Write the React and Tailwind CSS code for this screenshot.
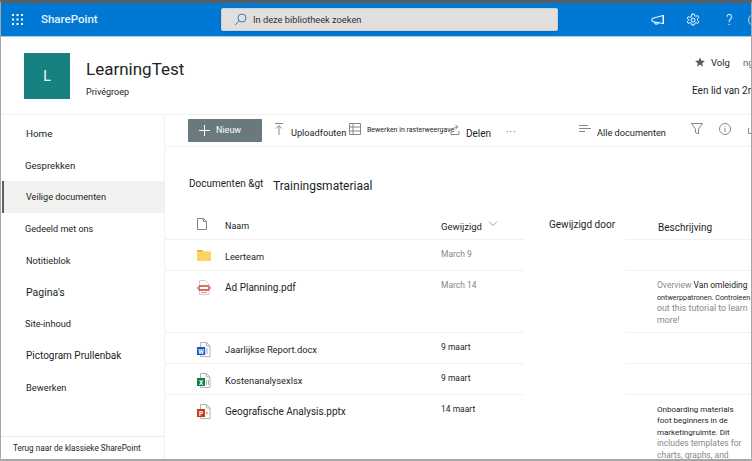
const font = { fontFamily: 'Roboto, "Open Sans", sans-serif' }

const navItems = [
  { label: 'Home', cls: 'text-[9.8px] pl-[25px]' },
  { label: 'Gesprekken', cls: 'text-[9.6px] pl-[24px]' },
  { label: 'Veilige documenten', cls: 'text-[9.1px] bg-[#f3f2f1] border-l-2 border-[#605e5c] ml-px pl-[22px]' },
  { label: 'Gedeeld met ons', cls: 'text-[9.1px] pl-[24px]' },
  { label: 'Notitieblok', cls: 'text-[9.2px] pl-[25px]' },
  { label: "Pagina's", cls: 'text-[10.5px] pl-[25px]' },
  { label: 'Site-inhoud', cls: 'text-[9.2px] pl-[24px]' },
  { label: 'Pictogram Prullenbak', cls: 'text-[10px] pl-[25px]' },
  { label: 'Bewerken', cls: 'text-[9.3px] pl-[25px]' },
]

function Waffle() {
  const dots = []
  for (let y = 0; y < 3; y++) {
    for (let x = 0; x < 3; x++) {
      dots.push(<rect key={`${x}${y}`} x={x * 4.5} y={y * 4.5} width="2" height="2" fill="#fff" />)
    }
  }
  return (
    <svg width="11" height="11" viewBox="0 0 11 11">
      {dots}
    </svg>
  )
}

function FileBase({ children }) {
  return (
    <svg width="14" height="15" viewBox="0 0 14 15" fill="none">
      <path d="M3.5.5h6l3.5 3.5v10.5h-9.5z" fill="#fff" stroke="#b5b3b1" />
      <path d="M9.5.5v3.5h3.5" stroke="#b5b3b1" />
      {children}
    </svg>
  )
}

function WordIcon() {
  return (
    <FileBase>
      <path d="M8 7h3M8 9h3M8 11h3" stroke="#8fb0e0" />
      <rect x="0" y="5" width="8" height="8" fill="#185abd" />
      <text x="4" y="11.5" fontSize="6.5" fill="#fff" textAnchor="middle" fontWeight="700">W</text>
    </FileBase>
  )
}

function ExcelIcon() {
  return (
    <FileBase>
      <path d="M9.5 7v5M11.5 7v5" stroke="#9cc7ad" />
      <rect x="0" y="5" width="8" height="8" fill="#107c41" />
      <text x="4" y="11.5" fontSize="6.5" fill="#fff" textAnchor="middle" fontWeight="700">X</text>
    </FileBase>
  )
}

function PptIcon() {
  return (
    <FileBase>
      <path d="M9 7.5l2.5 1.5-2.5 1.5z" fill="#e79a84" />
      <rect x="0" y="5" width="8" height="8" fill="#c43e1c" />
      <text x="4" y="11.5" fontSize="6.5" fill="#fff" textAnchor="middle" fontWeight="700">P</text>
    </FileBase>
  )
}

function PdfIcon() {
  return (
    <svg width="14" height="15" viewBox="0 0 14 15" fill="none">
      <path d="M2.5.5h6l3.5 3.5v10.5h-9.5z" fill="#fff" stroke="#d0cecc" />
      <rect x="2" y="6" width="10" height="4" rx="1" stroke="#d0432f" strokeWidth="1.4" />
      <rect x="0" y="7" width="2.5" height="2" fill="#e8907f" />
      <rect x="11.5" y="7" width="2.5" height="2" fill="#e8907f" />
      <path d="M4 12.5h6" stroke="#e8907f" />
    </svg>
  )
}

function Row({ icon, iconTop = 'pt-[9px]', name, nameCls = '', date, dateCls = 'text-[#8a8886]', h, children }) {
  const line = 'border-t border-[#f3f2f1]'
  return (
    <div className="flex shrink-0" style={{ height: h }}>
      <div className={`w-[276px] shrink-0 flex items-start ${line}`}>
        <div className={`w-[60px] shrink-0 pl-[32px] ${iconTop}`}>{icon}</div>
        <div className={`pt-[10px] leading-[14px] whitespace-nowrap text-[#252423] ${nameCls}`}>{name}</div>
      </div>
      <div className={`w-[83px] shrink-0 pt-[8px] leading-[12px] text-[8.5px] whitespace-nowrap ${line} ${dateCls}`}>{date}</div>
      <div className="w-[102px] shrink-0"></div>
      <div className={`flex-1 min-w-0 pl-[31px] pt-[9px] overflow-hidden ${line}`}>{children}</div>
    </div>
  )
}

export default function App() {
  return (
    <div
      className="w-[752px] h-[461px] overflow-hidden bg-white flex flex-col border-t-[3px] border-t-[#5c5c5c] border-x border-x-[#a6a6a6] border-b-2 border-b-[#a6a6a6] text-[#201f1e]"
      style={font}
    >
      {/* suite bar */}
      <div className="h-[34px] shrink-0 bg-[#0078d4] flex items-center border-b border-[#9fd0f0]">
        <div className="ml-[11px] w-[29px] shrink-0 flex">
          <Waffle />
        </div>
        <div className="w-[180px] shrink-0 text-[11.5px] font-medium text-white/90">SharePoint</div>
        <div className="w-[337px] shrink-0 h-[23px] bg-[#e1dfdd] rounded-[2px] border border-[#d2d0ce] flex items-center pl-[12px] shadow-sm">
          <svg width="13" height="13" viewBox="0 0 13 13" fill="none" stroke="#3f7fb5" strokeWidth="1">
            <circle cx="8" cy="5" r="4" />
            <path d="M5 8l-4 4" />
          </svg>
          <span className="ml-[6px] text-[9.25px] text-[#323130]">In deze bibliotheek zoeken</span>
        </div>
        <div className="ml-[93px] flex items-center text-white">
          <svg width="14" height="12" viewBox="0 0 14 12" fill="none" stroke="#fff" strokeWidth="1">
            <path d="M1 4.5l11-3v8l-11-2z" />
            <path d="M12.5 1v9M4 8v2h3v-1.5" />
          </svg>
          <svg className="ml-[21px]" width="14" height="14" viewBox="0 0 14 14" fill="none" stroke="#fff" strokeWidth="1">
            <circle cx="7" cy="7" r="2" />
            <path d="M5.8 1h2.4l.4 1.7 1.5.7 1.5-.9 1.2 1.9-1.3 1.2v1.8l1.3 1.2-1.2 1.9-1.5-.9-1.5.7-.4 1.7H5.8l-.4-1.7-1.5-.7-1.5.9-1.2-1.9 1.3-1.2V6.6L1.2 5.4l1.2-1.9 1.5.9 1.5-.7z" />
          </svg>
          <span className="ml-[26px] text-[14px] leading-none font-light">?</span>
          <div className="ml-[16px] w-[12px] h-[12px] rounded-full border border-white/70 shrink-0"></div>
        </div>
      </div>

      {/* site header */}
      <div className="h-[78px] shrink-0 flex border-b border-[#f3f2f1]">
        <div className="ml-[23px] mt-[16px] w-[46px] h-[46px] bg-[#178080] flex items-center justify-center text-white text-[14px]">
          L
        </div>
        <div className="ml-[16px] mt-[19px]">
          <div className="text-[17px] leading-[26px] text-[#252423]">LearningTest</div>
          <div className="mt-[4px] text-[9px] leading-[12px]">Privégroep</div>
        </div>
        <div className="ml-auto w-[59px] overflow-hidden text-[9.5px] whitespace-nowrap">
          <div className="mt-[19px] flex items-center pl-[3px] h-[14px]">
            <svg width="10" height="10" viewBox="0 0 24 24" fill="#605e5c" className="-mt-[2px] shrink-0">
              <path d="M12 1l3.4 7.6 8.3.9-6.2 5.6 1.7 8.2L12 18.2 4.8 23.4l1.7-8.2L.3 9.5l8.3-.9z" />
            </svg>
            <span className="ml-[6px] mt-[1px] shrink-0">Volg</span>
            <span className="ml-[13px] text-[#605e5c] shrink-0">ng</span>
          </div>
          <div className="mt-[13px] text-[10px]">Een lid van 2r</div>
        </div>
      </div>

      <div className="flex-1 flex min-h-0">
        {/* left nav */}
        <div className="w-[164px] shrink-0 border-r border-[#f3f2f1] flex flex-col">
          <div className="pt-[3px] flex-1">
            {navItems.map((item) => (
              <div key={item.label} className={`h-[31.6px] pt-[2px] flex items-center whitespace-nowrap ${item.cls}`}>
                {item.label}
              </div>
            ))}
          </div>
          <div className="h-[23px] border-t border-[#edebe9] pl-[12px] flex items-center text-[8.2px] whitespace-nowrap">
            Terug naar de klassieke SharePoint
          </div>
        </div>

        {/* main */}
        <div className="flex-1 min-w-0 flex flex-col overflow-hidden">
          <div className="h-[32px] shrink-0 flex items-center border-b border-[#f3f2f1] whitespace-nowrap">
            <div className="ml-[23px] w-[74px] h-[23px] bg-[#69797e] rounded-[1px] flex items-center text-white text-[9px] shrink-0">
              <svg className="ml-[11px]" width="11" height="11" viewBox="0 0 11 11" stroke="#fff" strokeWidth="1">
                <path d="M5.5 0v11M0 5.5h11" />
              </svg>
              <span className="ml-[6px]">Nieuw</span>
            </div>
            <svg className="ml-[13px] shrink-0 -mt-[3px]" width="8" height="12" viewBox="0 0 8 12" fill="none" stroke="#8a8886">
              <path d="M0 .5h8M4 12V3M1 5.5l3-3 3 3" />
            </svg>
            <span className="ml-[8px] w-[58px] shrink-0 text-[9.2px] mt-[5px]">Uploadfouten</span>
            <svg className="shrink-0 -mt-[3px]" width="12" height="12" viewBox="0 0 12 12" fill="none" stroke="#8a8886">
              <path d="M.5.5h11v11H.5zM.5 4h11M.5 8h11M4 .5v11" />
            </svg>
            <span className="ml-[6px] text-[7px] w-[83px] shrink-0">Bewerken in rasterweergave</span>
            <svg className="shrink-0 -mt-[3px]" width="10" height="11" viewBox="0 0 10 11" fill="none" stroke="#8a8886">
              <path d="M1 5v5.5h8V7M3 6c0-2 2-3 4-3M5.5 1L8 3 5.5 5" />
            </svg>
            <span className="ml-[6px] w-[40px] shrink-0 text-[10px] mt-[5px]">Delen</span>
            <span className="w-[73px] shrink-0 text-[10px] text-[#605e5c] tracking-[1px] leading-none mt-[5px]">···</span>
            <svg className="shrink-0 -mt-[3px]" width="12" height="9" viewBox="0 0 12 9" stroke="#8a8886">
              <path d="M0 .5h9M0 3.5h12M0 6.5h6" />
            </svg>
            <span className="ml-[6px] w-[94px] shrink-0 text-[9.2px] mt-[5px]">Alle documenten</span>
            <svg className="shrink-0 -mt-[3px]" width="12" height="12" viewBox="0 0 12 12" fill="none" stroke="#8a8886">
              <path d="M.5.5h11L7.5 6v5l-3-1.5V6z" />
            </svg>
            <svg className="ml-[16px] shrink-0 -mt-[3px]" width="12" height="12" viewBox="0 0 12 12" fill="none" stroke="#8a8886">
              <circle cx="6" cy="6" r="5.5" />
              <path d="M6 3v.8M6 5v4" />
            </svg>
            <svg className="ml-[17px] shrink-0" width="3" height="6" viewBox="0 0 3 6" fill="none" stroke="#8a8886">
              <path d="M.5 0v5.5H3" />
            </svg>
          </div>

          <div className="h-[63px] shrink-0 pl-[24px] pt-[29px] flex items-start whitespace-nowrap">
            <span className="w-[84px] shrink-0 text-[10px] leading-[16px]">Documenten &amp;gt</span>
            <span className="mt-px text-[12px] leading-[18px]">Trainingsmateriaal</span>
          </div>

          <div className="h-[29px] shrink-0 flex items-start text-[9px] whitespace-nowrap">
            <svg className="ml-[32px] mt-[8px] shrink-0" width="10" height="12" viewBox="0 0 10 12" fill="none" stroke="#8a8886">
              <path d="M.5.5h6l3 3v8h-9zM6.5.5v3h3" />
            </svg>
            <span className="ml-[18px] w-[216px] shrink-0 mt-[10px]">Naam</span>
            <span className="w-[47px] shrink-0 mt-[10px] text-[9.5px]">Gewijzigd</span>
            <svg className="mt-[11px] shrink-0" width="10" height="6" viewBox="0 0 10 6" fill="none" stroke="#a19f9d">
              <path d="M1 .5l4 4 4-4" />
            </svg>
            <span className="ml-[51px] w-[109px] shrink-0 mt-[7px] text-[10px]">Gewijzigd door</span>
            <span className="mt-[10px] text-[10px]">Beschrijving</span>
          </div>

          <Row
            h={31}
            iconTop="pt-[10px]"
            name="Leerteam"
            nameCls="text-[9.2px]"
            date="March 9"
            icon={
              <svg width="14" height="11" viewBox="0 0 14 11">
                <path d="M0 1a1 1 0 0 1 1-1h4l1.5 1.5H14V11H0z" fill="#fcd462" />
                <path d="M0 1a1 1 0 0 1 1-1h4l1.5 1.5H0z" fill="#e8a91e" />
              </svg>
            }
          />
          <Row h={62} name="Ad Planning.pdf" nameCls="text-[10px]" date="March 14" icon={<PdfIcon />}>
            <div className="text-[8.5px] leading-[11.5px] text-[#8a8886] whitespace-nowrap">
              <div>Overview <span className="text-[#201f1e]">Van omleiding</span></div>
              <div className="text-[#201f1e] text-[7.2px]">ontwerppatronen. Controleen</div>
              <div className="text-[8.8px]">out this tutorial to learn</div>
              <div className="text-[8.8px]">more!</div>
            </div>
          </Row>
          <Row h={31} name="Jaarlijkse Report.docx" nameCls="text-[9.3px]" date="9 maart" dateCls="text-[#201f1e]" icon={<WordIcon />} />
          <Row h={31} name="Kostenanalysexlsx" nameCls="text-[9.4px]" date="9 maart" dateCls="text-[#201f1e]" icon={<ExcelIcon />} />
          <Row h={65} name="Geografische Analysis.pptx" nameCls="text-[10px]" date="14 maart" dateCls="text-[#201f1e]" icon={<PptIcon />}>
            <div className="text-[8px] leading-[11.4px] whitespace-nowrap">
              <div>Onboarding materials</div>
              <div>foot beginners in de</div>
              <div>marketingruimte. Dit</div>
              <div className="text-[#8a8886] text-[8.5px]">includes templates for</div>
              <div className="text-[#8a8886] text-[8.5px]">charts, graphs, and</div>
            </div>
          </Row>
        </div>
      </div>
    </div>
  )
}
